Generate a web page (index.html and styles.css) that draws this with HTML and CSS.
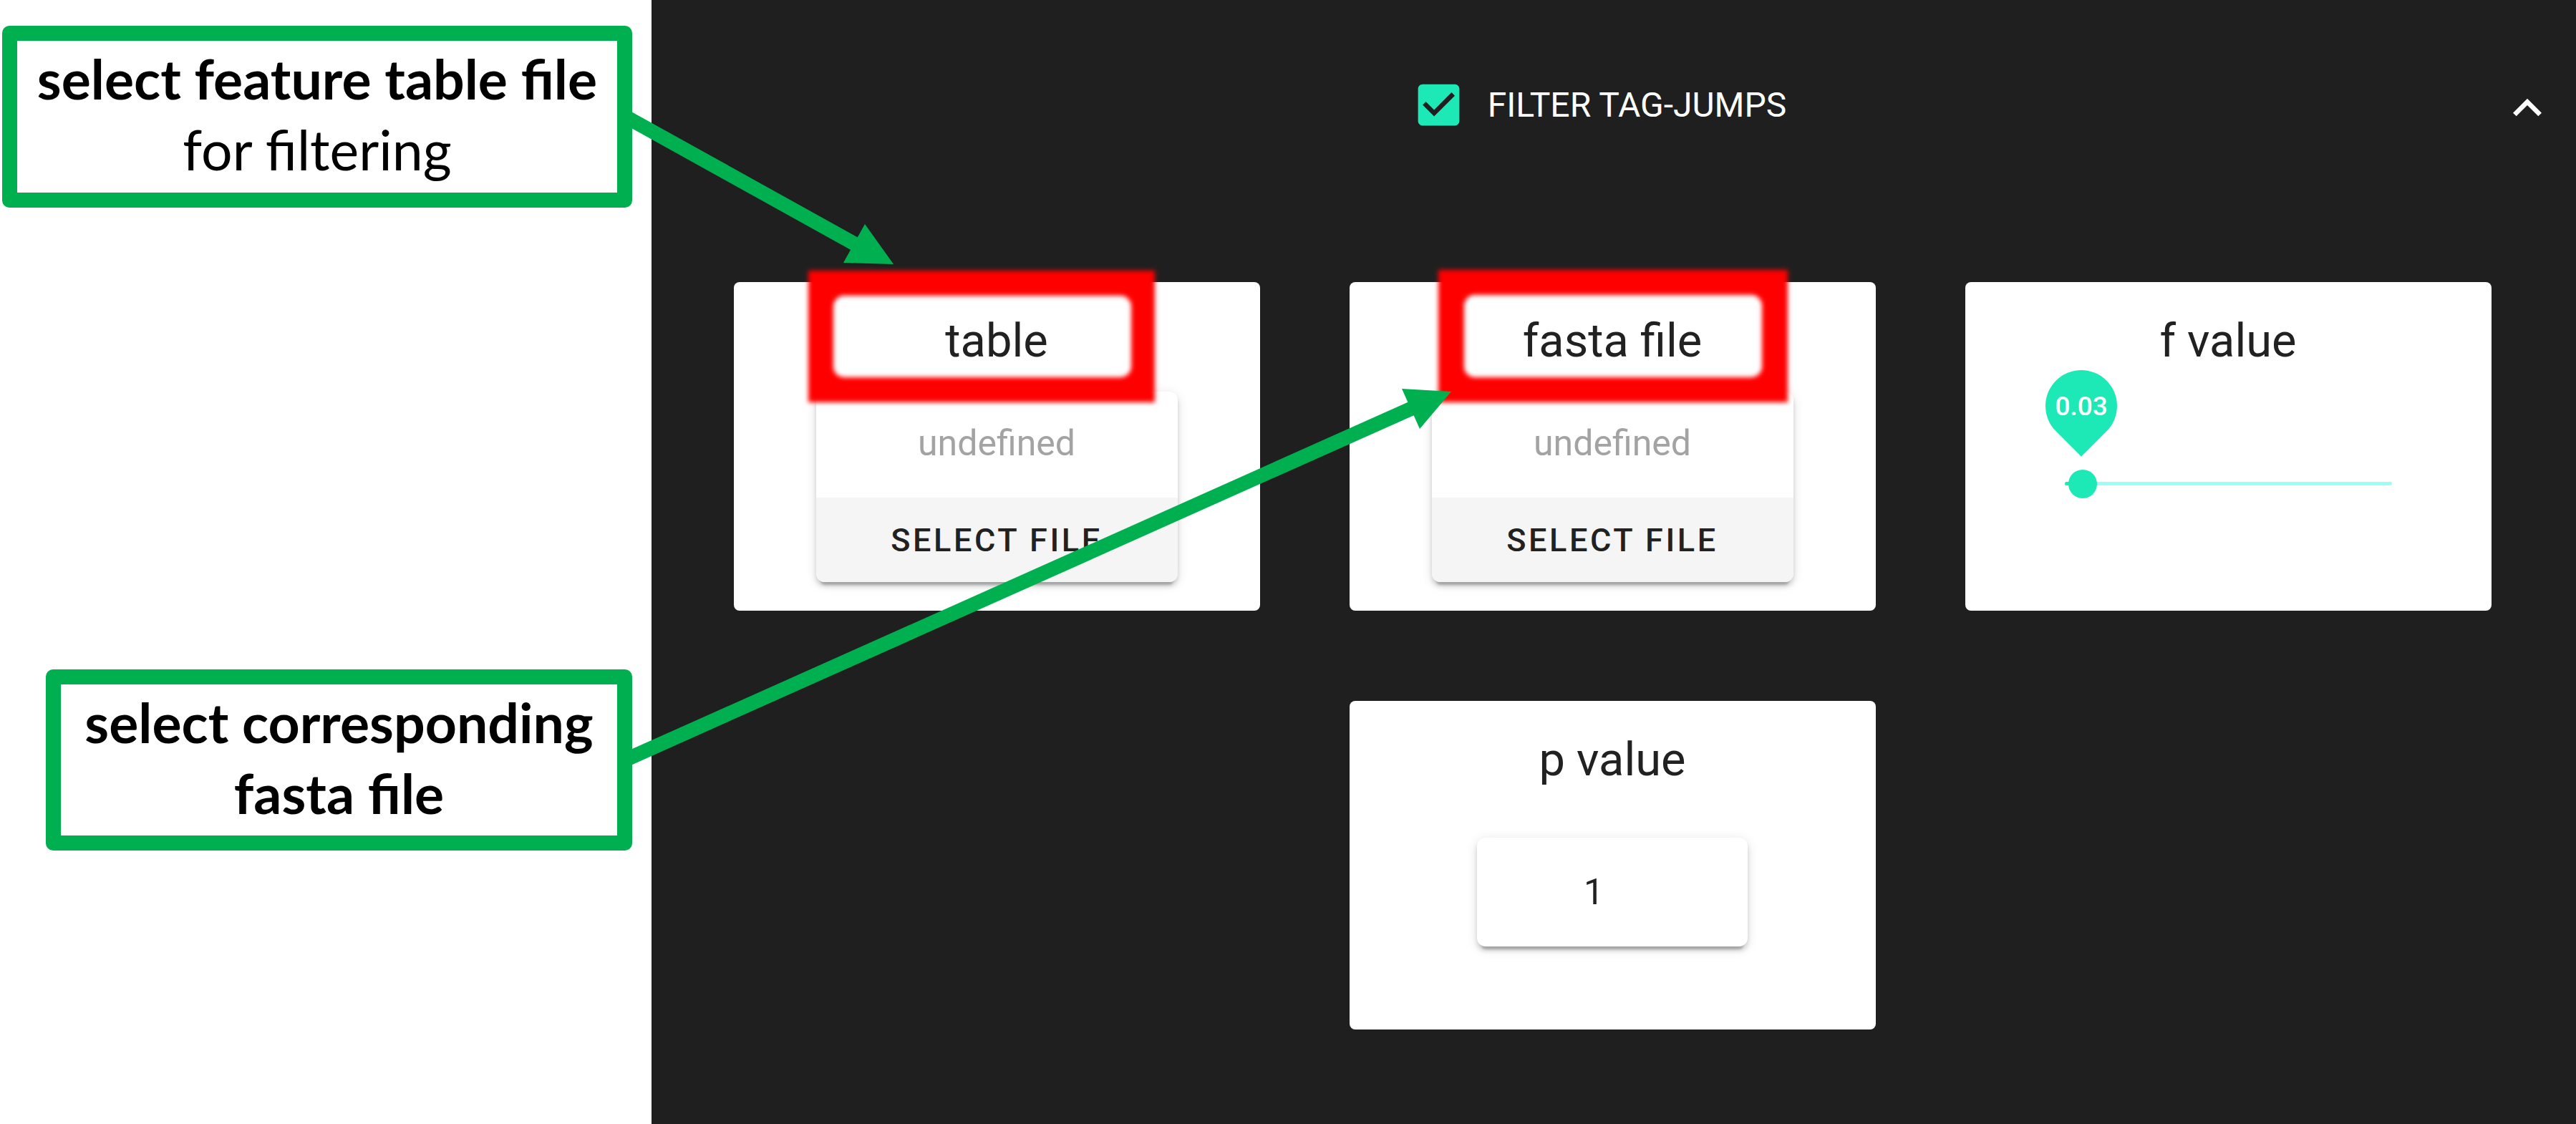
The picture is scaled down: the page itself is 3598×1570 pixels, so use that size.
FILE: index.html
```html
<!DOCTYPE html>
<html lang="en">
<head>
<meta charset="utf-8">
<title>Filter tag-jumps</title>
<link rel="stylesheet" href="styles.css">
</head>
<body>
<div class="page">
  <aside class="notes">
    <div class="callout callout-top">
      <p class="callout-text"><b>select feature table file</b><br>for filtering</p>
    </div>
    <div class="callout callout-bottom">
      <p class="callout-text"><b>select corresponding<br>fasta file</b></p>
    </div>
  </aside>

  <main class="panel">
    <header class="panel-head">
      <label class="toggle">
        <svg class="check" viewBox="0 0 24 24"><path d="M19 3H5c-1.11 0-2 .9-2 2v14c0 1.1.89 2 2 2h14c1.110 0 2-.9 2-2V5c0-1.1-.89-2-2-2zm-9 14l-5-5 1.41-1.41L10 14.170l7.590-7.590L19 8l-9 9z"/></svg>
        <span class="toggle-label">FILTER TAG-JUMPS</span>
      </label>
      <svg class="expand" viewBox="0 0 24 24"><path d="M12 8l-6 6 1.41 1.41L12 10.83l4.59 4.58L18 14z"/></svg>
    </header>

    <section class="cards">
      <div class="card">
        <h2 class="card-title">table</h2>
        <div class="file-box">
          <div class="file-name">undefined</div>
          <div class="file-btn">SELECT FILE</div>
        </div>
        <svg class="highlight hl-table" viewBox="0 0 484 184">
          <defs><filter id="blurA"><feGaussianBlur stdDeviation="3"/></filter></defs>
          <path fill-rule="evenodd" filter="url(#blurA)" d="M0 0H484V184H0Z M50 35H436A15 15 0 0 1 451 50V134A15 15 0 0 1 436 149H50A15 15 0 0 1 35 134V50A15 15 0 0 1 50 35Z"/>
        </svg>
      </div>

      <div class="card">
        <h2 class="card-title">fasta file</h2>
        <div class="file-box">
          <div class="file-name">undefined</div>
          <div class="file-btn">SELECT FILE</div>
        </div>
        <svg class="highlight hl-fasta" viewBox="0 0 488 185">
          <defs><filter id="blurB"><feGaussianBlur stdDeviation="3"/></filter></defs>
          <path fill-rule="evenodd" filter="url(#blurB)" d="M0 0H488V185H0Z M51 35H437A15 15 0 0 1 452 50V135A15 15 0 0 1 437 150H51A15 15 0 0 1 36 135V50A15 15 0 0 1 51 35Z"/>
        </svg>
      </div>

      <div class="card">
        <h2 class="card-title">f value</h2>
        <div class="slider">
          <div class="slider-track"></div>
          <div class="slider-thumb"></div>
          <div class="slider-label"><span class="slider-value">0.03</span></div>
        </div>
      </div>

      <div class="card card-p">
        <h2 class="card-title">p value</h2>
        <div class="num-box">1</div>
      </div>
    </section>
  </main>

  <svg class="arrows" viewBox="0 0 3598 1570">
    <line x1="872" y1="162" x2="1198" y2="343" />
    <polygon points="1208,313 1178,367 1248,369" />
    <line x1="872" y1="1062" x2="1975" y2="569" />
    <polygon points="1958,543 1983,599 2027,547" />
  </svg>
</div>
</body>
</html>
```

FILE: styles.css
```css
* { box-sizing: border-box; }

html, body {
  margin: 0;
  padding: 0;
}

body {
  width: 3598px;
  height: 1570px;
  overflow: hidden;
  background: #ffffff;
  font-family: Roboto, "Liberation Sans", sans-serif;
}

.page {
  position: relative;
  display: flex;
  width: 3598px;
  height: 1570px;
}

/* ---------- annotation column ---------- */
.notes {
  width: 910px;
  flex: none;
  background: #ffffff;
  display: flex;
  flex-direction: column;
  align-items: flex-start;
  padding-top: 36px;
}

.callout {
  border: 21px solid #00b050;
  border-radius: 10px;
  height: 254px;
  padding-top: 3px;
  text-align: center;
  font-family: Lato, "Open Sans", sans-serif;
  color: #000000;
  background: #ffffff;
}

.callout-top {
  width: 880px;
  margin-left: 3px;
}

.callout-bottom {
  width: 819px;
  height: 253px;
  margin-left: 64px;
  margin-top: 645px;
}

.callout-text {
  margin: 0;
  font-size: 77px;
  line-height: 99px;
  font-weight: 400;
}

.callout-text b { font-weight: 700; }

/* ---------- dark panel ---------- */
.panel {
  flex: 1;
  background: #1f1f1f;
}

.panel-head {
  height: 292px;
  display: grid;
  grid-template-columns: 1fr auto 1fr;
  align-items: center;
}

.toggle {
  grid-column: 2;
  display: flex;
  align-items: center;
  gap: 30px;
  margin-right: 42px;
}

.check {
  width: 77px;
  height: 77px;
  fill: #1de9b6;
  flex: none;
}

.toggle-label {
  color: #ffffff;
  font-size: 48px;
  font-weight: 400;
  letter-spacing: 0;
}

.expand {
  grid-column: 3;
  justify-self: end;
  width: 80px;
  height: 80px;
  fill: #ffffff;
  margin-right: 28px;
  margin-top: 9px;
}

.cards {
  display: grid;
  grid-template-columns: repeat(3, 735px);
  grid-auto-rows: 459px;
  column-gap: 125px;
  row-gap: 126px;
  justify-content: center;
  padding-top: 102px;
  padding-right: 4px;
}

.card {
  position: relative;
  background: #ffffff;
  border-radius: 8px;
  padding-top: 43px;
  display: flex;
  flex-direction: column;
  align-items: center;
}

.card-p { grid-column: 2; }

.card-title {
  margin: 0;
  font-size: 65px;
  line-height: 78px;
  font-weight: 400;
  color: #212121;
}

/* file selector */
.file-box {
  margin-top: 32px;
  width: 505px;
  border-radius: 12px;
  overflow: hidden;
  background: #ffffff;
  box-shadow: 0 10px 3px -6px rgba(0,0,0,0.2), 0 6px 6px 0 rgba(0,0,0,0.14), 0 3px 16px 0 rgba(0,0,0,0.12);
}

.file-name {
  padding: 35px 0 38px;
  font-size: 50px;
  line-height: 75px;
  color: #a3a3a3;
  text-align: center;
}

.file-btn {
  height: 118px;
  background: #f5f5f5;
  display: flex;
  align-items: center;
  justify-content: center;
  font-size: 45px;
  font-weight: 500;
  letter-spacing: 0.08em;
  color: #212121;
}

/* red highlight frames (annotation overlay) */
.highlight {
  position: absolute;
  overflow: visible;
  fill: #ff0000;
}

.hl-table { left: 104px; top: -16px; width: 484px; height: 184px; }
.hl-fasta { left: 124px; top: -17px; width: 488px; height: 185px; }

/* slider */
.slider {
  position: relative;
  width: 457px;
  height: 5px;
  margin-top: 158px;
  border-radius: 3px;
  background: #9cfff4;
}

.slider-track {
  position: absolute;
  left: 0;
  top: 0;
  width: 25px;
  height: 5px;
  background: #1de9b6;
  border-radius: 3px;
}

.slider-thumb {
  position: absolute;
  left: 5px;
  top: -17px;
  width: 40px;
  height: 40px;
  border-radius: 50%;
  background: #1de9b6;
}

.slider-label {
  position: absolute;
  left: -27px;
  top: -156px;
  width: 100px;
  height: 100px;
  border-radius: 50% 50% 50% 0;
  background: #1de9b6;
  transform: rotate(-45deg);
  display: flex;
  align-items: center;
  justify-content: center;
}

.slider-value {
  transform: rotate(45deg);
  color: #ffffff;
  font-size: 37px;
  font-weight: 500;
}

/* number input */
.num-box {
  margin-top: 70px;
  width: 378px;
  height: 152px;
  border-radius: 12px;
  background: #ffffff;
  box-shadow: 0 10px 3px -6px rgba(0,0,0,0.2), 0 6px 6px 0 rgba(0,0,0,0.14), 0 3px 16px 0 rgba(0,0,0,0.12);
  display: flex;
  align-items: center;
  justify-content: center;
  padding-right: 52px;
  font-size: 50px;
  color: #212121;
}

/* arrows overlay */
.arrows {
  position: absolute;
  left: 0;
  top: 0;
  width: 3598px;
  height: 1570px;
  pointer-events: none;
}

.arrows line {
  stroke: #00b050;
  stroke-width: 20;
}

.arrows polygon {
  fill: #00b050;
}
```
